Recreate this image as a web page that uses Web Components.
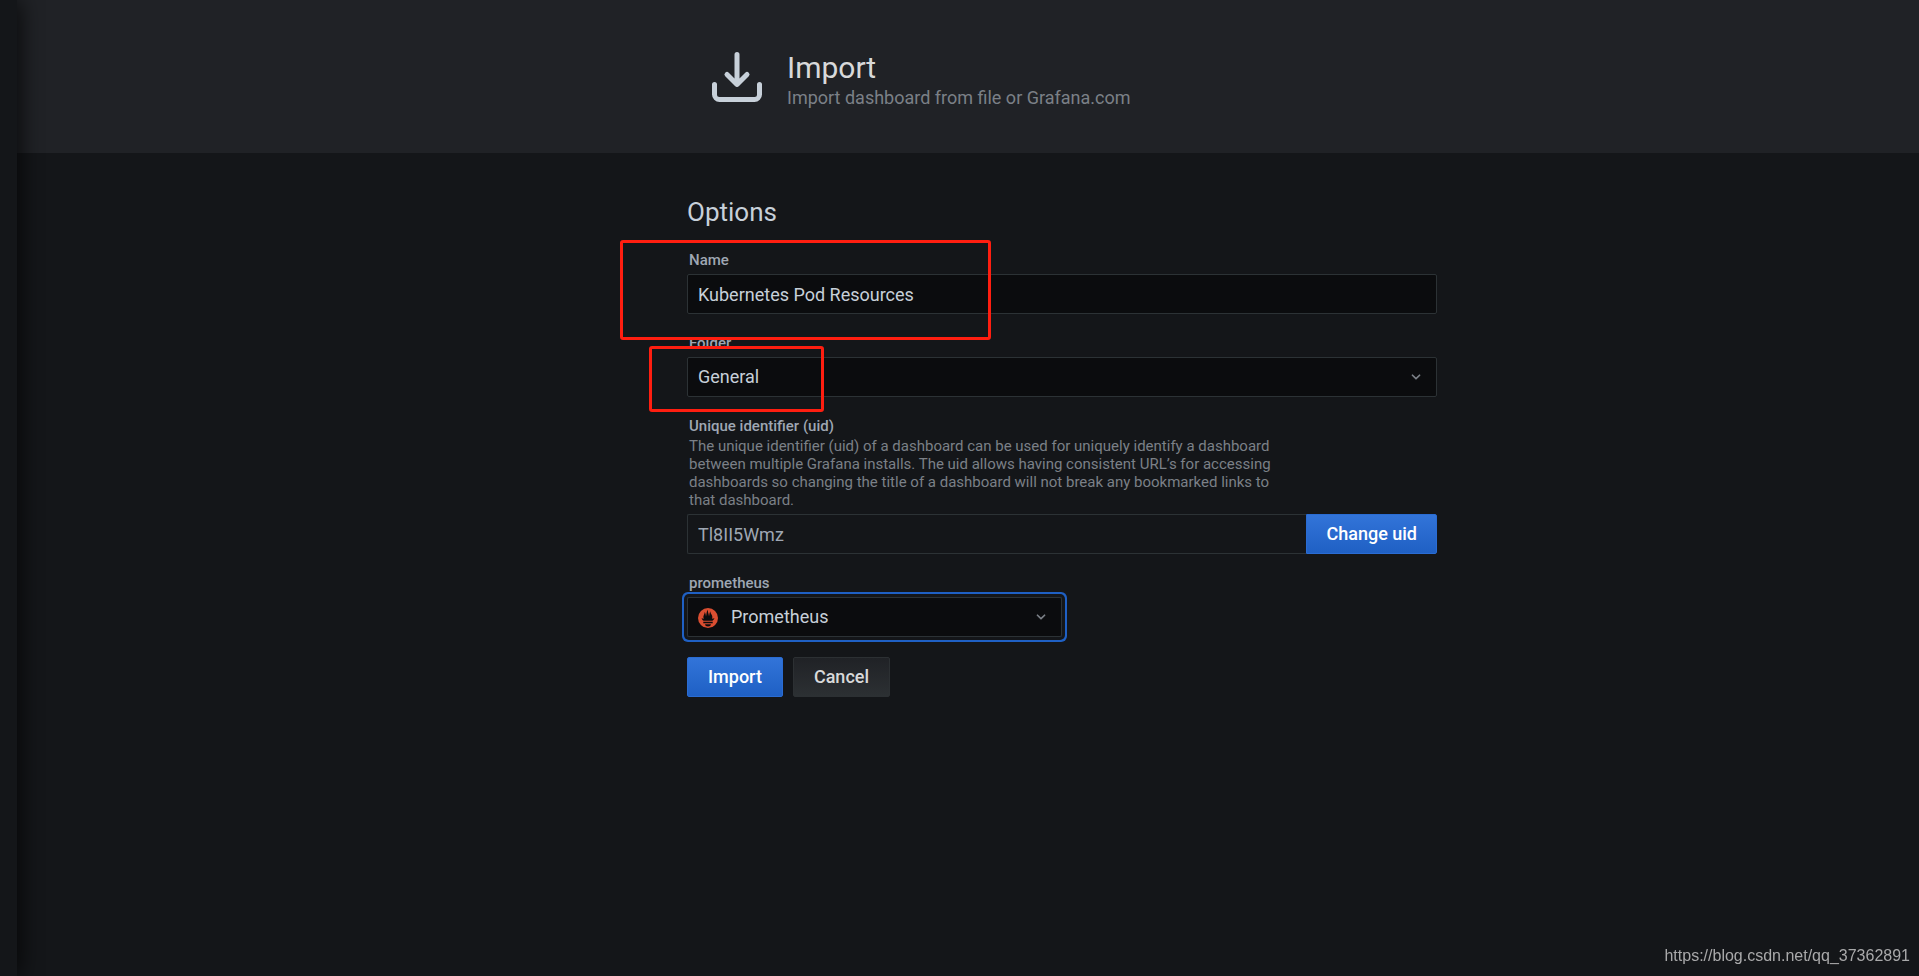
<!DOCTYPE html>
<html lang="en">
<head>
<meta charset="utf-8">
<title>Import - Grafana</title>
<style>
body { margin: 0; background: #141619; color: #c7d0d9; font-family: Roboto, "Liberation Sans", sans-serif; }
</style>
</head>
<body>
<import-app></import-app>
<script>
function define(name, html, setup) {
  const template = document.createElement('template');
  template.innerHTML = html;
  customElements.define(name, class extends HTMLElement {
    constructor() {
      super();
      this.attachShadow({ mode: 'open', delegatesFocus: true }).append(template.content.cloneNode(true));
    }
    connectedCallback() { if (setup) setup(this, this.shadowRoot); }
  });
}

define('page-header', `
<style>
:host { display: block; box-sizing: border-box; padding: 47px 0 44px calc(50% - 261px); background: #202226; }
header { display: flex; align-items: flex-start; gap: 20px; }
svg { width: 60px; height: 60px; fill: #c7d0d9; flex: none; }
h1 { margin: 0; padding-top: 4px; font-size: 30px; line-height: 34px; font-weight: 400; color: #d8d9da; }
p { margin: 0; font-size: 18px; line-height: 22px; padding-top: 2px; color: #7b8087; }
</style>
<header>
<svg viewBox="0 0 24 24" aria-hidden="true"><path d="M21,14a1,1,0,0,0-1,1v4a1,1,0,0,1-1,1H5a1,1,0,0,1-1-1V15a1,1,0,0,0-2,0v4a3,3,0,0,0,3,3H19a3,3,0,0,0,3-3V15A1,1,0,0,0,21,14Zm-9.710,1.710a1,1,0,0,0,.33.21.94.94,0,0,0,.76,0,1,1,0,0,0,.33-.21l4-4a1,1,0,0,0-1.42-1.42L13,12.59V3a1,1,0,0,0-2,0v9.59l-2.29-2.3a1,1,0,1,0-1.42,1.42Z"/></svg>
<div><h1><slot></slot></h1><p><slot name="sub"></slot></p></div>
</header>`);

define('text-field', `
<style>
:host { display: block; }
label { display: block; padding-left: 2px; margin-bottom: 5px; font-size: 15px; line-height: 18px; font-weight: 500; color: #9fa7b3; }
p { margin: -3px 0 5px; padding-left: 2px; max-width: 600px; font-size: 15px; line-height: 18px; color: #7b8087; }
p:not(.on) { display: none; }
.row { display: flex; }
input { flex: 1; min-width: 0; box-sizing: border-box; height: 40px; padding: 0 10px; font: 400 18px/24px Roboto, "Liberation Sans", sans-serif; color: #c7d0d9; background: #0b0c0e; border: 1px solid #2c3235; border-radius: 2px; outline: 0; }
input:read-only { background: #141619; color: #9fa7b3; border-right: 0; border-radius: 2px 0 0 2px; }
</style>
<label for="box"></label>
<p><slot name="help"></slot></p>
<div class="row"><input id="box" type="text" spellcheck="false"><slot name="action"></slot></div>`, (host, root) => {
  root.querySelector('label').textContent = host.getAttribute('label');
  root.querySelector('input').value = host.getAttribute('value');
  root.querySelector('input').readOnly = host.hasAttribute('readonly');
  root.querySelector('p').classList.toggle('on', !!host.querySelector('[slot=help]'));
});

define('select-field', `
<style>
:host { display: block; }
label { display: block; padding-left: 2px; margin-bottom: 5px; font-size: 15px; line-height: 18px; font-weight: 500; color: #9fa7b3; }
.row { display: grid; align-items: center; border-radius: 2px; }
:host([focused]) .row { box-shadow: 0 0 0 3px #141619, 0 0 0 5px #1f60c4; }
select, .icon, .arrow { grid-area: 1 / 1; }
select { appearance: none; width: 100%; box-sizing: border-box; height: 40px; padding: 0 10px; font: 400 18px/24px Roboto, "Liberation Sans", sans-serif; color: #c7d0d9; background: #0b0c0e; border: 1px solid #2c3235; border-radius: 2px; outline: 0; }
:host([icon]) select { padding-left: 43px; }
.icon, .arrow { pointer-events: none; z-index: 1; display: flex; }
.icon { margin: 2px 0 0 11px; justify-self: start; }
.arrow { justify-self: end; margin-right: 11px; width: 20px; height: 20px; fill: #7b8087; }
</style>
<label for="box"></label>
<div class="row">
<select id="box"><option></option></select>
<span class="icon"><slot name="icon"></slot></span>
<svg class="arrow" viewBox="0 0 24 24" aria-hidden="true"><path d="M17,9.17a1,1,0,0,0-1.41,0L12,12.71,8.46,9.17a1,1,0,0,0-1.41,0,1,1,0,0,0,0,1.42l4.24,4.24a1,1,0,0,0,1.42,0L17,10.59A1,1,0,0,0,17,9.17Z"/></svg>
</div>`, (host, root) => {
  root.querySelector('label').textContent = host.getAttribute('label');
  root.querySelector('option').textContent = host.getAttribute('value');
});

define('ui-button', `
<style>
:host { display: block; }
button { display: block; box-sizing: border-box; height: 40px; padding: 0 20px; font: 500 18px/24px Roboto, "Liberation Sans", sans-serif; color: #fff; background: linear-gradient(#3274d9, #1f60c4); border: 1px solid #2a6cd3; border-radius: 2px; white-space: nowrap; }
:host([joined]) button { padding: 0 19px; border-radius: 0 2px 2px 0; }
:host([secondary]) button { color: #d8d9da; background: linear-gradient(#202226, #2c3033); border-color: #2c3033; }
</style>
<button type="button"><slot></slot></button>`);

define('prometheus-logo', `
<style>:host { display: block; } svg { display: block; width: 20px; height: 20px; }</style>
<svg viewBox="0 0 20 20" aria-hidden="true"><circle cx="10" cy="10" r="10" fill="#da4e31"/><path fill="#0b0c0e" d="M5.6 12.7C4.4 11.9 3.8 11 3.5 10.2L6 10.8C5.3 9.700 5.2 8.5 5.7 7.4C6.3 6.2 6.7 5.4 6.6 4C7.4 4.8 7.8 6.2 8 8.4C8.6 6.500 8.5 3 9.8 1.800C9.600 3.800 10.700 5.500 11 8.200C11.500 6.800 11.300 4.600 12.500 3.200C12.200 4.700 13.100 5.600 13.800 7C14.500 8.400 14.500 9.700 13.900 10.800L16.500 10.200C16.200 11.100 15.500 12 14.500 12.700ZM5.300 13.800H14.700V15.200H5.300ZM7.100 16.300H12.900C12.900 17.700 11.600 18.500 10 18.500S7.100 17.700 7.100 16.300Z"/></svg>`);

define('highlight-frame', `
<style>:host { position: absolute; z-index: 2; box-sizing: border-box; border: 3px solid #ff1e10; border-radius: 3px; pointer-events: none; }</style>`);

define('import-app', `
<style>
:host { display: grid; grid-template-columns: 17px minmax(0, 1fr); min-height: 100vh; }
aside { position: relative; z-index: 1; background: #141619; box-shadow: 0 0 25px #000; }
main { padding: 0 20px 40px calc(50% - 281px); }
h2 { margin: 0; padding: 44px 0 24px; font-size: 26px; line-height: 30px; font-weight: 400; }
form { position: relative; display: flex; flex-direction: column; gap: 20px; max-width: 750px; }
.source { width: 375px; }
.buttons { display: flex; gap: 10px; }
.name-frame { left: -67px; top: -11px; width: 371px; height: 100px; }
.folder-frame { left: -38px; top: 95px; width: 175px; height: 66px; }
a { position: fixed; right: 9px; bottom: 8px; font: 16px/24px "Liberation Sans", Arial, sans-serif; color: #a9a9aa; text-decoration: none; }
</style>
<aside></aside>
<div>
<page-header>Import<span slot="sub">Import dashboard from file or Grafana.com</span></page-header>
<main>
<h2>Options</h2>
<form>
<text-field label="Name" value="Kubernetes Pod Resources"></text-field>
<select-field label="Folder" value="General"></select-field>
<text-field label="Unique identifier (uid)" value="Tl8II5Wmz" readonly><span slot="help">The unique identifier (uid) of a dashboard can be used for uniquely identify a dashboard between multiple Grafana installs. The uid allows having consistent URL’s for accessing dashboards so changing the title of a dashboard will not break any bookmarked links to that dashboard.</span><ui-button slot="action" joined>Change uid</ui-button></text-field>
<select-field class="source" label="prometheus" value="Prometheus" icon focused><prometheus-logo slot="icon"></prometheus-logo></select-field>
<div class="buttons"><ui-button>Import</ui-button><ui-button secondary>Cancel</ui-button></div>
<highlight-frame class="name-frame"></highlight-frame>
<highlight-frame class="folder-frame"></highlight-frame>
</form>
</main>
</div>
<a href="https://blog.csdn.net/qq_37362891">https://blog.csdn.net/qq_37362891</a>`);
</script>
</body>
</html>
